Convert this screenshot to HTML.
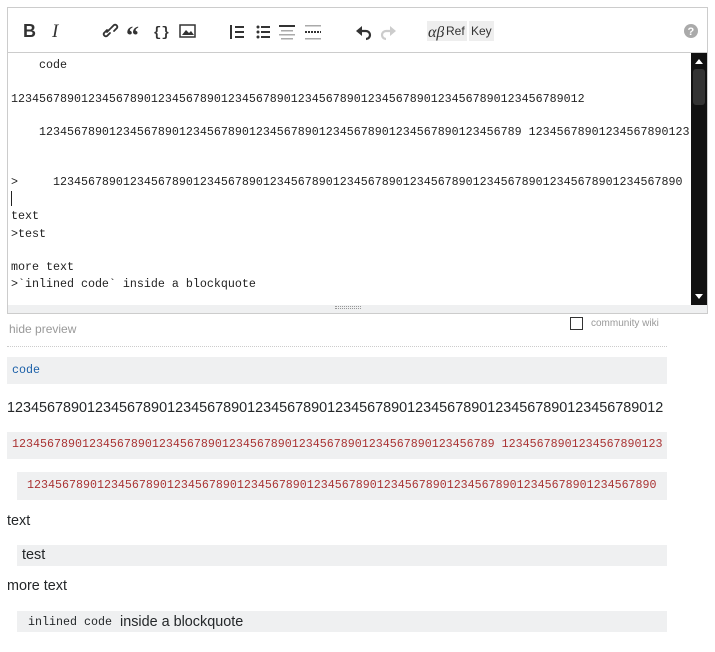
<!DOCTYPE html>
<html><head><meta charset="utf-8"><style>
*{box-sizing:border-box;margin:0;padding:0}
body{width:715px;height:652px;background:#fff;font-family:"Liberation Sans",Arial,sans-serif;position:relative;overflow:hidden}
.abs{position:absolute}
#tb{left:7px;top:7px;width:701px;height:46px;border:1px solid #ccc;border-bottom:none}
#ta{left:7px;top:52px;width:701px;height:254px;border:1px solid #ccc;border-top:1px solid #ccc;overflow:hidden}
.m{font-family:"Liberation Mono","DejaVu Sans Mono",monospace;font-size:11.67px;color:#222;white-space:pre;position:absolute;left:3px;line-height:14px}
#sb{right:0;top:0;width:16px;height:252px;background:#111}
#grip{left:7px;top:305px;width:701px;height:9px;background:#eff0f1;border:1px solid #ccc;border-top:none}
.pre{position:absolute;background:#eff0f1;font-family:"Liberation Mono",monospace;font-size:11.67px;white-space:pre}
.t{position:absolute;font-size:14.4px;color:#242729}
.btn{position:absolute;top:13px;height:20px;background:#eee;font-size:12px;color:#333;line-height:20px;padding:0 2px}
</style></head><body>
<div id="tb" class="abs">
<svg width="701" height="46" style="position:absolute;left:-1px;top:-1px">
<g fill="#333" stroke="none">
<text x="16" y="30" font-family="Liberation Sans" font-weight="bold" font-size="18">B</text>
<text x="45" y="30" font-family="Liberation Serif" font-style="italic" font-size="19">I</text>
</g>
<g stroke="#333" fill="none" stroke-width="1.8" stroke-linecap="round">
<path d="M103 22 l-3 3 M100 23 l-3 3 a2.2 2.2 0 0 0 3 3 l3-3 M104 21 l3-3 a2.2 2.2 0 0 1 3 3 l-3 3"/>
</g>
<text x="119" y="37" font-family="Liberation Serif" font-weight="bold" font-size="26" fill="#333">“</text>
<text x="146" y="29" font-family="Liberation Mono" font-weight="bold" font-size="14" fill="#333">{}</text>
<rect x="173" y="18" width="15" height="12" fill="none" stroke="#333" stroke-width="1.5"/>
<path d="M175 28 l4-5 3 3 2-2 3 4z" fill="#333"/>
<g fill="#333">
<rect x="228" y="19" width="9" height="2"/><rect x="228" y="24" width="9" height="2"/><rect x="228" y="29" width="9" height="2"/>
<rect x="223" y="18" width="2" height="14"/>
<circle cx="251" cy="20" r="1.5"/><circle cx="251" cy="25" r="1.5"/><circle cx="251" cy="30" r="1.5"/>
<rect x="254" y="19" width="9" height="2"/><rect x="254" y="24" width="9" height="2"/><rect x="254" y="29" width="9" height="2"/>
<rect x="272" y="18" width="16" height="2"/>
</g>
<g fill="#aaa"><rect x="274" y="23" width="12" height="1.5"/><rect x="272" y="27" width="16" height="1.5"/><rect x="274" y="31" width="12" height="1.5"/>
<rect x="298" y="18" width="16" height="1.5"/><rect x="298" y="31" width="16" height="1.5"/></g>
<path d="M298 25 h16" stroke="#333" stroke-width="2" stroke-dasharray="2 1"/>
<path d="M355 24 h4 a4 4 0 0 1 0 8" stroke="#333" stroke-width="2.2" fill="none"/><path d="M349 24 l6-5 v10z" fill="#333"/>
<path d="M383 24 h-4 a4 4 0 0 0 0 8" stroke="#ccc" stroke-width="2.2" fill="none"/><path d="M389 24 l-6-5 v10z" fill="#ccc"/>
<rect x="420" y="14" width="22" height="20" fill="#eee"/>
<text x="421" y="30" font-family="Liberation Serif" font-style="italic" font-size="16" fill="#333">αβ</text>
<circle cx="684" cy="24" r="7" fill="#aaa"/><text x="680.5" y="28" font-size="11" font-weight="bold" fill="#fff">?</text>
</svg>
<div class="btn" style="left:436px">Ref</div>
<div class="btn" style="left:461px">Key</div>
</div>
<div id="ta" class="abs">
<div class="m" style="top:5px">    code</div>
<div class="m" style="top:39px">1234567890123456789012345678901234567890123456789012345678901234567890123456789012</div>
<div class="m" style="top:72px">    123456789012345678901234567890123456789012345678901234567890123456789 12345678901234567890123</div>
<div class="m" style="top:122px">&gt;     123456789012345678901234567890123456789012345678901234567890123456789012345678901234567890</div>
<div class="abs" style="left:3px;top:138px;width:1px;height:15px;background:#222"></div>
<div class="m" style="top:156px">text</div>
<div class="m" style="top:174px">&gt;test</div>
<div class="m" style="top:207px">more text</div>
<div class="m" style="top:224px">&gt;`inlined code` inside a blockquote</div>
<div id="sb" class="abs">
<div class="abs" style="left:4px;top:6px;border:4px solid transparent;border-bottom:5px solid #fff;border-top:none;width:0"></div>
<div class="abs" style="left:2px;top:16px;width:12px;height:36px;background:#333;border-radius:3px"></div>
<div class="abs" style="left:4px;bottom:6px;border:4px solid transparent;border-top:5px solid #fff;border-bottom:none;width:0"></div>
</div>
</div>
<div id="grip" class="abs"><div class="abs" style="left:327px;top:1px;width:26px;height:3px;border-top:1px dotted #999;border-bottom:1px dotted #999"></div></div>
<div class="abs" style="left:9px;top:322px;font-size:12px;color:#999">hide preview</div>
<div class="abs" style="left:570px;top:317px;width:13px;height:13px;border:1px solid #333"></div>
<div class="abs" style="left:591px;top:318px;font-size:10px;color:#999">community wiki</div>
<div class="abs" style="left:7px;top:346px;width:660px;border-top:1px dotted #ccc"></div>
<div class="pre" style="left:7px;top:357px;width:660px;height:27px;padding:6px 5px;color:#1a5fa8">code</div>
<div class="t" style="left:7px;top:400px">1234567890123456789012345678901234567890123456789012345678901234567890123456789012</div>
<div class="pre" style="left:7px;top:432px;width:660px;height:27px;padding:5px 5px;color:#a33">123456789012345678901234567890123456789012345678901234567890123456789 12345678901234567890123</div>
<div class="pre" style="left:17px;top:472px;width:650px;height:28px;padding:6px 10px;color:#a33">123456789012345678901234567890123456789012345678901234567890123456789012345678901234567890</div>
<div class="t" style="left:7px;top:513px">text</div>
<div class="abs" style="left:17px;top:545px;width:650px;height:21px;background:#eff0f1"></div>
<div class="t" style="left:22px;top:547px">test</div>
<div class="t" style="left:7px;top:578px">more text</div>
<div class="abs" style="left:17px;top:611px;width:650px;height:21px;background:#eff0f1"></div>
<div class="abs" style="left:28px;top:615px;font-family:'Liberation Mono',monospace;font-size:11.67px;color:#242729">inlined code</div>
<div class="t" style="left:120px;top:614px">inside a blockquote</div>
</body></html>
